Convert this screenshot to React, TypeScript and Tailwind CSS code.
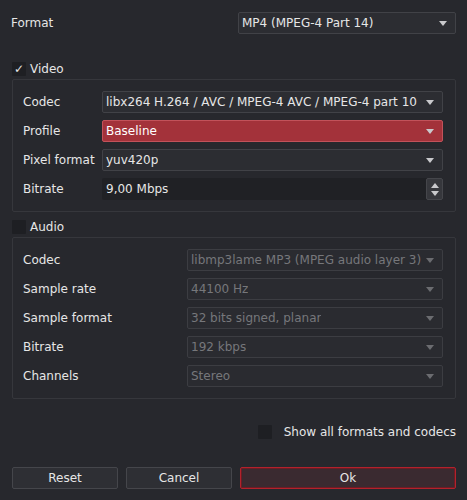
import React from "react";

const font = { fontFamily: '"DejaVu Sans", "Liberation Sans", sans-serif' };

const Arrow = ({ dim }: { dim?: boolean }) => (
  <svg width="8" height="5" viewBox="0 0 8 5" className="shrink-0">
    <path d="M0 0 H8 L4 5 Z" fill={dim ? "#6b6c70" : "#c9c9cc"} />
  </svg>
);

const Combo = ({
  value,
  tone = "normal",
  className = "",
}: {
  value: string;
  tone?: "normal" | "red" | "disabled";
  className?: string;
}) => {
  const styles =
    tone === "red"
      ? "bg-[#a3323a] border-[#c2525a] text-white"
      : tone === "disabled"
        ? "bg-[#2a2b30] border-[#3c3d42] text-[#76777b]"
        : "bg-[#2c2d32] border-[#414247] text-[#e6e6e6]";
  return (
    <div
      className={`h-[22px] flex items-center justify-between border rounded-[2px] pl-[3px] pr-[8px] ${styles} ${className}`}
    >
      <span className="truncate">{value}</span>
      <Arrow dim={tone === "disabled"} />
    </div>
  );
};

const SpinBox = ({ value }: { value: string }) => (
  <div className="h-[22px] flex items-center justify-between bg-[#202125] rounded-[2px] pl-[4px] flex-1">
    <span className="text-[#e6e6e6]">{value}</span>
    <div className="h-[22px] w-[17px] flex flex-col items-center justify-center gap-[3px] bg-[#36373c] border border-[#45464b] rounded-[2px]">
      <svg width="8" height="5" viewBox="0 0 8 5">
        <path d="M0 5 H8 L4 0 Z" fill="#c9c9cc" />
      </svg>
      <svg width="8" height="5" viewBox="0 0 8 5">
        <path d="M0 0 H8 L4 5 Z" fill="#c9c9cc" />
      </svg>
    </div>
  </div>
);

const CheckBox = ({ checked }: { checked?: boolean }) => (
  <div className="w-[14px] h-[14px] bg-[#1e1f23] rounded-[1px] flex items-center justify-center text-[12px] leading-none text-[#e6e6e6]">
    {checked ? "✓" : ""}
  </div>
);

const Row = ({
  label,
  labelWidth,
  children,
}: {
  label: string;
  labelWidth: string;
  children: React.ReactNode;
}) => (
  <div className="flex items-center h-[22px]">
    <span className={`${labelWidth} shrink-0 text-[#e6e6e6]`}>{label}</span>
    {children}
  </div>
);

const Button = ({
  label,
  primary,
  className = "",
}: {
  label: string;
  primary?: boolean;
  className?: string;
}) => (
  <div
    className={`h-[22px] flex items-center justify-center rounded-[2px] border ${
      primary
        ? "bg-[#3a2a30] border-[#b3222c] shadow-[inset_0_0_0_1px_#6b1c24]"
        : "bg-[#2e2f34] border-[#45464b]"
    } text-[#e6e6e6] ${className}`}
  >
    {label}
  </div>
);

export default function App() {
  return (
    <div
      style={font}
      className="w-[467px] h-[500px] bg-[#27282d] text-[12px] pt-[12px] pl-[11px] pr-[11px] flex flex-col"
    >
      <div className="flex items-center justify-between h-[22px]">
        <span className="text-[#e6e6e6]">Format</span>
        <Combo value="MP4 (MPEG-4 Part 14)" className="w-[218px]" />
      </div>

      <div className="mt-[28px] h-[17px] flex items-start gap-[4px] pl-[1px]">
        <CheckBox checked />
        <span className="text-[#e6e6e6] leading-[14px]">Video</span>
      </div>
      <div className="ml-[1px] border border-[#36373c] rounded-[2px] pt-[11px] pb-[11px] pl-[10px] pr-[12px] flex flex-col gap-[7px]">
        <Row label="Codec" labelWidth="w-[79px]">
          <Combo
            value="libx264 H.264 / AVC / MPEG-4 AVC / MPEG-4 part 10"
            className="flex-1"
          />
        </Row>
        <Row label="Profile" labelWidth="w-[79px]">
          <Combo value="Baseline" tone="red" className="flex-1" />
        </Row>
        <Row label="Pixel format" labelWidth="w-[79px]">
          <Combo value="yuv420p" className="flex-1" />
        </Row>
        <Row label="Bitrate" labelWidth="w-[79px]">
          <SpinBox value="9,00 Mbps" />
        </Row>
      </div>

      <div className="mt-[8px] h-[17px] flex items-start gap-[4px] pl-[1px]">
        <CheckBox />
        <span className="text-[#e6e6e6] leading-[14px]">Audio</span>
      </div>
      <div className="ml-[1px] border border-[#36373c] rounded-[2px] pt-[11px] pb-[11px] pl-[10px] pr-[12px] flex flex-col gap-[7px]">
        <Row label="Codec" labelWidth="w-[164px]">
          <Combo
            value="libmp3lame MP3 (MPEG audio layer 3)"
            tone="disabled"
            className="flex-1"
          />
        </Row>
        <Row label="Sample rate" labelWidth="w-[164px]">
          <Combo value="44100 Hz" tone="disabled" className="flex-1" />
        </Row>
        <Row label="Sample format" labelWidth="w-[164px]">
          <Combo value="32 bits signed, planar" tone="disabled" className="flex-1" />
        </Row>
        <Row label="Bitrate" labelWidth="w-[164px]">
          <Combo value="192 kbps" tone="disabled" className="flex-1" />
        </Row>
        <Row label="Channels" labelWidth="w-[164px]">
          <Combo value="Stereo" tone="disabled" className="flex-1" />
        </Row>
      </div>

      <div className="mt-[26px] h-[14px] flex items-center justify-end gap-[12px]">
        <CheckBox />
        <span className="text-[#e6e6e6]">Show all formats and codecs</span>
      </div>

      <div className="mt-[28px] flex gap-[8px] pl-[1px]">
        <Button label="Reset" className="w-[106px]" />
        <Button label="Cancel" className="w-[106px]" />
        <Button label="Ok" primary className="flex-1" />
      </div>
    </div>
  );
}
